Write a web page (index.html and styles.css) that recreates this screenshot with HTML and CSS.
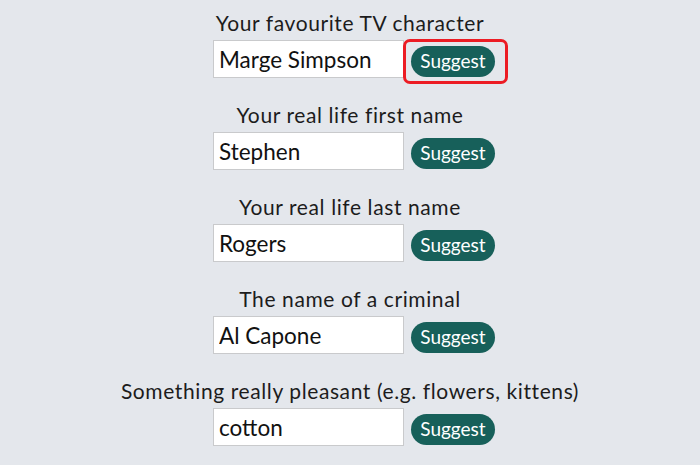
FILE: index.html
```html
<!DOCTYPE html>
<html>
<head>
<meta charset="utf-8">
<link rel="stylesheet" href="styles.css">
</head>
<body>
<main class="form">
  <div class="field">
    <label class="label">Your favourite TV character</label>
    <div class="row">
      <input class="input" type="text" value="Marge Simpson">
      <button class="suggest highlighted">Suggest</button>
    </div>
  </div>
  <div class="field">
    <label class="label">Your real life first name</label>
    <div class="row">
      <input class="input" type="text" value="Stephen">
      <button class="suggest">Suggest</button>
    </div>
  </div>
  <div class="field">
    <label class="label">Your real life last name</label>
    <div class="row">
      <input class="input" type="text" value="Rogers">
      <button class="suggest">Suggest</button>
    </div>
  </div>
  <div class="field">
    <label class="label">The name of a criminal</label>
    <div class="row">
      <input class="input" type="text" value="Al Capone">
      <button class="suggest">Suggest</button>
    </div>
  </div>
  <div class="field">
    <label class="label">Something really pleasant (e.g. flowers, kittens)</label>
    <div class="row">
      <input class="input" type="text" value="cotton">
      <button class="suggest">Suggest</button>
    </div>
  </div>
</main>
</body>
</html>
```

FILE: styles.css
```css
html, body {
  margin: 0;
  padding: 0;
  background: #e4e7ec;
}
body {
  width: 700px;
  height: 465px;
  overflow: hidden;
}
.form {
  display: flex;
  flex-direction: column;
  gap: 24px;
  padding-top: 10px;
}
.field {
  display: flex;
  flex-direction: column;
  align-items: center;
  gap: 4px;
}
.label {
  font-family: "Lato", "Liberation Sans", sans-serif;
  font-size: 21px;
  letter-spacing: 0.6px;
  line-height: 26px;
  color: #1c1c1c;
}
.row {
  display: flex;
  align-items: flex-end;
  justify-content: center;
  padding-left: 8px;
}
.input {
  box-sizing: border-box;
  width: 191px;
  height: 38px;
  margin: 0;
  padding: 0 0 0 5px;
  border: 1px solid #c9cacc;
  border-radius: 0;
  background: #fff;
  font-family: "Lato", "Liberation Sans", sans-serif;
  font-size: 22.5px;
  color: #111;
  outline: none;
}
.suggest {
  position: relative;
  box-sizing: border-box;
  width: 84px;
  height: 31px;
  margin: 0 0 1px 7px;
  padding: 0 0 2px;
  border: none;
  border-radius: 16px;
  background: #17605a;
  color: #fff;
  font-family: "Lato", "Liberation Sans", sans-serif;
  font-size: 19px;
}
.highlighted::after {
  content: "";
  position: absolute;
  top: -7px;
  bottom: -7px;
  left: -8px;
  right: -13px;
  border: 3px solid #ec1c24;
  border-radius: 7px;
}
```
